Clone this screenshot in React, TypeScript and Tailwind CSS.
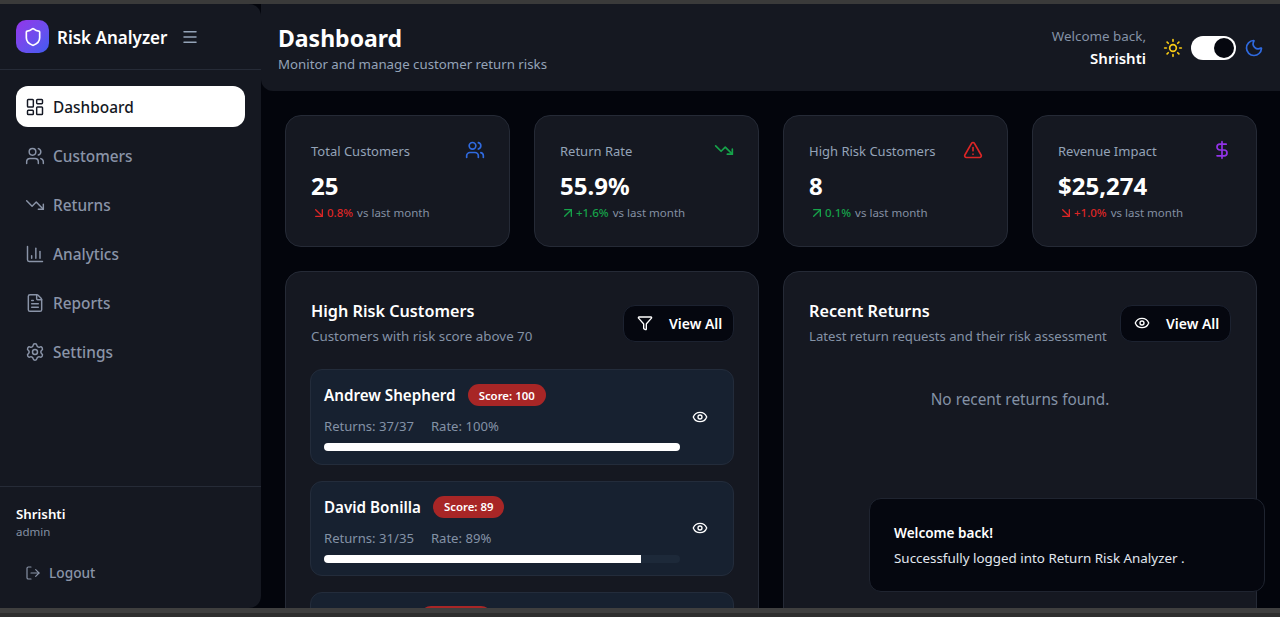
import React from "react";
import { LayoutDashboard, Users, TrendingDown, ChartColumn, FileText, Settings, LogOut, Shield, Menu, Sun, Moon, TriangleAlert, DollarSign, ArrowDownRight, ArrowUpRight, Filter, Eye } from "lucide-react";

const nav = [
  { label: "Customers", Icon: Users },
  { label: "Returns", Icon: TrendingDown },
  { label: "Analytics", Icon: ChartColumn },
  { label: "Reports", Icon: FileText },
  { label: "Settings", Icon: Settings },
];

function Stat({ title, value, delta, deltaColor, Trend, Icon, iconColor }: any) {
  return (
    <div className="h-[132px] rounded-2xl border border-[#252a36] bg-[#151821] pl-[25px] pr-6 pt-6">
      <div className="flex items-start justify-between">
        <span className="mt-[1px] text-[13px] leading-[20px] text-[#94a3b8]">{title}</span>
        <Icon className={`size-5 ${iconColor}`} strokeWidth={2} />
      </div>
      <div className="mt-[9px] text-2xl leading-8 font-bold text-white">{value}</div>
      <div className="mt-[3px] flex items-center text-[11.5px] leading-4">
        <Trend className={`size-4 ${deltaColor}`} strokeWidth={2} />
        <span className={`font-medium ${deltaColor}`}>{delta}</span>
        <span className="ml-1 text-[#8490a3]">vs last month</span>
      </div>
    </div>
  );
}

function CustomerRow({ name, score, returns, rate, pct }: any) {
  return (
    <div className="flex h-[95.5px] shrink-0 items-center rounded-xl border border-[#232c3b] bg-[#172130] pl-[13px] pr-[25px]">
      <div className="min-w-0 flex-1 pt-[2px]">
        <div className="flex h-[22px] items-center gap-3">
          <span className="text-[15.2px] leading-6 font-semibold text-white">{name}</span>
          <span className="flex h-[22px] items-center rounded-full bg-[#a82626] px-[11px] text-[11.4px] font-semibold text-white">Score: {score}</span>
        </div>
        <div className="mt-[10px] flex gap-[17px] text-[13.1px] leading-5 text-[#8492a6]">
          <span>Returns: {returns}</span>
          <span>Rate: {rate}</span>
        </div>
        <div className="mt-[7px] h-2 overflow-hidden rounded-full bg-[#1d2939]">
          <div className="h-full bg-white" style={{ width: pct }} />
        </div>
      </div>
      <Eye className="ml-3 size-4 text-white" strokeWidth={2} />
    </div>
  );
}

function ViewAll({ Icon }: any) {
  return (
    <button className="mt-[3px] flex h-[37px] w-[111px] shrink-0 items-center rounded-xl border border-[#1c2230] bg-[#05070f] pl-[13px] text-[14px] font-semibold text-white">
      <Icon className="size-4" strokeWidth={2} />
      <span className="ml-[16px]">View All</span>
    </button>
  );
}

export default function App() {
  return (
    <div className="relative flex h-screen flex-col overflow-hidden bg-[#03050c] [font-family:'Noto_Sans','Open_Sans',sans-serif]">
      <div className="h-1 shrink-0 bg-[#3a3a3a]" />
      <div className="flex min-h-0 flex-1">
        <aside className="flex w-[261px] shrink-0 flex-col rounded-r-xl bg-[#151821]">
          <div className="flex h-[66px] shrink-0 items-center border-b border-[#262b37] pl-4">
            <div className="flex size-[33px] items-center justify-center rounded-[10px] bg-gradient-to-br from-[#9333ea] to-[#3b5bf0]">
              <Shield className="size-5 text-white" strokeWidth={2} />
            </div>
            <span className="ml-2 pt-[2px] text-[17px] leading-7 font-semibold text-white">Risk Analyzer</span>
            <Menu className="ml-[14px] size-[18px] text-[#94a3b8]" strokeWidth={2} />
          </div>
          <nav className="flex flex-col gap-2 px-4 pt-4">
            <div className="flex h-[41px] items-center gap-[8px] rounded-xl bg-white pl-[9px] text-[#141824]">
              <LayoutDashboard className="size-5" strokeWidth={1.75} />
              <span className="pt-[2px] text-[15.4px] font-medium">Dashboard</span>
            </div>
            {nav.map(({ label, Icon }) => (
              <div key={label} className="flex h-[41px] items-center gap-[8px] pl-[9px] text-[#8a94a8]">
                <Icon className="size-5" strokeWidth={1.75} />
                <span className="pt-[2px] text-[15.4px] font-medium">{label}</span>
              </div>
            ))}
          </nav>
          <div className="mt-auto border-t border-[#262b37] px-4 pt-[17px] pb-[15px]">
            <div className="text-[13.3px] leading-[20px] font-semibold text-white">Shrishti</div>
            <div className="text-[11.5px] leading-4 text-[#8490a3]">admin</div>
            <div className="mt-[13px] flex h-10 items-center pl-[9px] text-[#8a94a8]">
              <LogOut className="size-4" strokeWidth={1.75} />
              <span className="ml-[8px] text-[13.7px] font-medium">Logout</span>
            </div>
          </div>
        </aside>
        <div className="flex min-w-0 flex-1 flex-col">
          <header className="flex h-[87px] shrink-0 items-center justify-between rounded-bl-xl bg-[#151821] pr-4 pl-[17px]">
            <div>
              <h1 className="text-[23px] leading-8 font-bold text-white">Dashboard</h1>
              <p className="text-[13.25px] leading-5 text-[#94a3b8]">Monitor and manage customer return risks</p>
            </div>
            <div className="flex items-center">
              <div className="text-right">
                <div className="text-[13.4px] leading-5 text-[#8492a6]">Welcome back,</div>
                <div className="text-[15px] leading-6 font-semibold text-white">Shrishti</div>
              </div>
              <Sun className="ml-[17px] size-5 text-[#facc15]" strokeWidth={2} />
              <div className="ml-[8px] flex h-6 w-[45px] items-center justify-end rounded-full bg-white pr-[2px]">
                <div className="size-5 rounded-full bg-[#05070f]" />
              </div>
              <Moon className="ml-[8px] size-5 text-[#2f6ae0]" strokeWidth={2} />
            </div>
          </header>
          <main className="flex min-h-0 flex-1 flex-col gap-6 overflow-hidden pt-6 pl-6 pr-[23px]">
            <div className="grid shrink-0 grid-cols-4 gap-6">
              <Stat title="Total Customers" value="25" delta="0.8%" deltaColor="text-[#dc2626]" Trend={ArrowDownRight} Icon={Users} iconColor="text-[#2f6ae0]" />
              <Stat title="Return Rate" value="55.9%" delta="+1.6%" deltaColor="text-[#16a34a]" Trend={ArrowUpRight} Icon={TrendingDown} iconColor="text-[#16a34a]" />
              <Stat title="High Risk Customers" value="8" delta="0.1%" deltaColor="text-[#16a34a]" Trend={ArrowUpRight} Icon={TriangleAlert} iconColor="text-[#dc2626]" />
              <Stat title="Revenue Impact" value="$25,274" delta="+1.0%" deltaColor="text-[#dc2626]" Trend={ArrowDownRight} Icon={DollarSign} iconColor="text-[#9333ea]" />
            </div>
            <div className="grid min-h-0 flex-1 grid-cols-2 gap-6">
              <section className="flex min-h-[400px] flex-col rounded-t-2xl border border-[#252a36] bg-[#151821] px-6 pt-[25px]">
                <div className="flex items-center justify-between pl-[1px]">
                  <div>
                    <h2 className="text-[16.2px] leading-7 font-semibold text-white">High Risk Customers</h2>
                    <p className="mt-[1px] text-[13.35px] leading-5 text-[#8492a6]">Customers with risk score above 70</p>
                  </div>
                  <ViewAll Icon={Filter} />
                </div>
                <div className="mt-[23px] flex flex-col gap-4">
                  <CustomerRow name="Andrew Shepherd" score="100" returns="37/37" rate="100%" pct="100%" />
                  <CustomerRow name="David Bonilla" score="89" returns="31/35" rate="89%" pct="89%" />
                  <div className="relative h-[96px] shrink-0 rounded-xl border border-[#232c3b] bg-[#172130]">
                    <span className="absolute top-[13px] left-[109px] h-[22px] w-[72px] rounded-full bg-[#a82626]" />
                  </div>
                </div>
              </section>
              <section className="flex min-h-[400px] flex-col rounded-t-2xl border border-[#252a36] bg-[#151821] pr-[25px] pl-[25px] pt-[25px]">
                <div className="flex items-center justify-between gap-3">
                  <div className="min-w-0">
                    <h2 className="text-[16.2px] leading-7 font-semibold text-white">Recent Returns</h2>
                    <p className="mt-[1px] text-[13.15px] leading-5 whitespace-nowrap text-[#8492a6]">Latest return requests and their risk assessment</p>
                  </div>
                  <ViewAll Icon={Eye} />
                </div>
                <p className="mt-[41px] text-center text-[15.35px] leading-6 text-[#8492a6]">No recent returns found.</p>
              </section>
            </div>
          </main>
        </div>
      </div>
      <div className="relative z-10 h-[9px] shrink-0 bg-[#2e2e2e]">
        <div className="h-[5px] bg-[#3f3f3f]" />
      </div>
      <div className="absolute top-[498px] left-[869px] h-[94px] w-[396px] rounded-xl border border-[#1f2430] bg-[#05070f] pt-[24px] pl-[24px]">
        <div className="text-[13.55px] leading-5 font-semibold text-white">Welcome back!</div>
        <div className="mt-[5px] text-[13.4px] leading-5 text-[#e2e8f0]">Successfully logged into Return Risk Analyzer .</div>
      </div>
    </div>
  );
}
